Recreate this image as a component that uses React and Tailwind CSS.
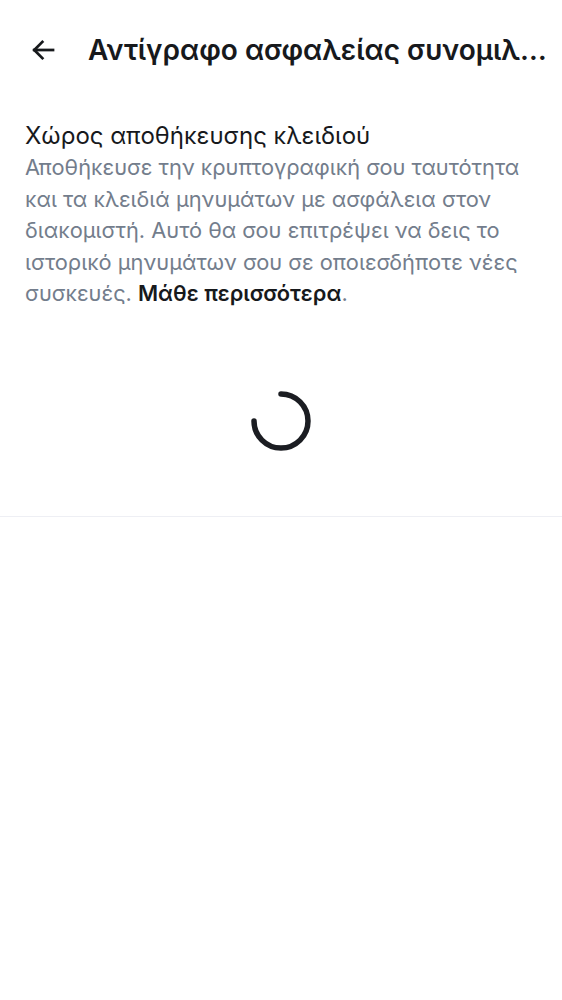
import React from "react";

export default function App() {
  return (
    <div className="w-[562px] h-[1000px] bg-white text-[#17191c]" style={{ fontFamily: "Inter, 'Noto Sans', sans-serif" }}>
      <div className="flex items-center h-[100px] pl-[28px] pr-[10px]">
        <svg width="30" height="30" viewBox="0 0 24 24" fill="none" stroke="#17191c" strokeWidth="2.2" strokeLinecap="square" className="shrink-0">
          <path d="M20 12H5" />
          <path d="M11.5 5.5L5 12l6.5 6.5" />
        </svg>
        <div className="ml-[30px] text-[28px] font-semibold whitespace-nowrap leading-none">Αντίγραφο ασφαλείας συνομιλ…</div>
      </div>
      <div className="pl-[25px] pr-[25px] pt-[20px]">
        <div className="text-[24px] leading-[32px] text-[#17191c]">Χώρος αποθήκευσης κλειδιού</div>
        <p className="text-[21.8px] leading-[31.5px] text-[#737d8c]">
          Αποθήκευσε την κρυπτογραφική σου ταυτότητα και τα κλειδιά μηνυμάτων με ασφάλεια στον διακομιστή. Αυτό θα σου επιτρέψει να δεις το ιστορικό μηνυμάτων σου σε οποιεσδήποτε νέες συσκευές. <span className="font-semibold text-[#17191c]">Μάθε περισσότερα</span>.
        </p>
      </div>
      <div className="flex justify-center pt-[79px] pb-[63px]">
        <svg width="64" height="64" viewBox="0 0 64 64" fill="none">
          <path d="M32 5 A27 27 0 1 1 5 32" stroke="#1b1d22" strokeWidth="5.5" strokeLinecap="round" />
        </svg>
      </div>
      <div className="h-px bg-[#eeeff4]" />
    </div>
  );
}
